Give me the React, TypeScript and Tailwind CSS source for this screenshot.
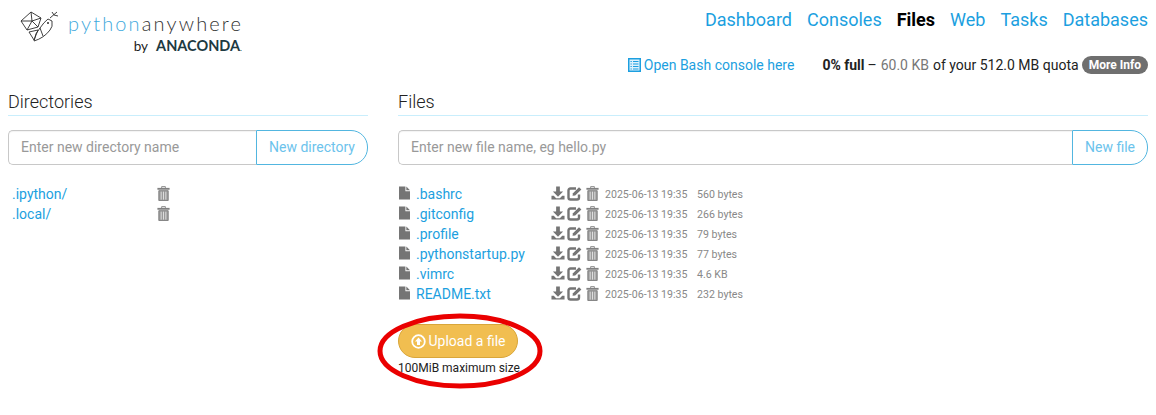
const files = [
  { name: ".bashrc", size: "560 bytes" },
  { name: ".gitconfig", size: "266 bytes" },
  { name: ".profile", size: "79 bytes" },
  { name: ".pythonstartup.py", size: "77 bytes" },
  { name: ".vimrc", size: "4.6 KB" },
  { name: "README.txt", size: "232 bytes" },
];

const nav = ["Dashboard", "Consoles", "Files", "Web", "Tasks", "Databases"];

function Logo() {
  return (
    <svg width="50" height="42" viewBox="0 0 50 42" fill="none" stroke="#2b2b2b" strokeWidth="0.9" strokeLinejoin="round" className="shrink-0">
      <path d="M2 12 L12 3 L22 9 L19 18 L8 21 Z M12 3 L13 12 L22 9 M2 12 L13 12 L8 21 M13 12 L19 18" />
      <path d="M10 23 L19 21 L15 31 Z" />
      <path d="M15 32 Q16 24 21 19 Q25 13 29 10 L33 12 Q34 18 31 21 Q25 29 15 32 Z M21 19 L24 27" />
      <path d="M31 9 L38 3 M33 3 L35 6 M35 6 L39 7" />
      <circle cx="29" cy="14" r="1" fill="#2b2b2b" stroke="none" />
    </svg>
  );
}

function DownloadIcon() {
  return (
    <svg width="14" height="14" viewBox="0 0 15 15" fill="#757575" className="shrink-0">
      <path d="M5.5 0.5 H9.5 V6 H13 L7.5 11.5 L2 6 H5.5 Z" />
      <path d="M0.5 10.5 H3 L5.5 13 H9.5 L12 10.5 H14.5 V14.5 H0.5 Z" />
    </svg>
  );
}

function EditIcon() {
  return (
    <svg width="15" height="15" viewBox="0 0 15 15" fill="none" className="shrink-0">
      <path d="M9 2.5 H3.5 Q1.5 2.5 1.5 4.5 V11.5 Q1.5 13.5 3.5 13.5 H10 Q12 13.5 12 11.5 V8.5" stroke="#757575" strokeWidth="2.4" />
      <path d="M5.5 9.8 L6 7.2 L12 1.2 L14.4 3.4 L8.2 9.4 Z" fill="#757575" />
    </svg>
  );
}

function TrashIcon() {
  return (
    <svg width="13" height="15" viewBox="0 0 13 16" fill="none" className="shrink-0">
      <path d="M4.5 2 V0.7 H8.5 V2" stroke="#808080" strokeWidth="1" />
      <path d="M0 2 H13 V4 H0 Z" fill="#808080" />
      <path d="M1.5 5 H11.5 V15.5 H1.5 Z" fill="#9a9a9a" stroke="#808080" />
      <path d="M4 6 V14.5 M6.5 6 V14.5 M9 6 V14.5" stroke="#e2e2e2" strokeWidth="1" />
    </svg>
  );
}

function FileIcon() {
  return (
    <svg width="11" height="14" viewBox="0 0 12 14" fill="#757575" className="shrink-0">
      <path d="M0 0 H7 V5 H12 V14 H0 Z" />
      <path d="M8 0 L12 4 H8 Z" />
    </svg>
  );
}

function ConsoleIcon() {
  return (
    <svg width="13" height="14" viewBox="0 0 13 14" fill="none" className="shrink-0">
      <rect x="0.75" y="0.75" width="11.5" height="12.5" stroke="#1c9fe0" strokeWidth="1.5" fill="#dff2fc" />
      <path d="M2.5 3.5 H3.8 M5 3.5 H10.5 M2.5 6 H3.8 M5 6 H10.5 M2.5 8.5 H3.8 M5 8.5 H10.5 M2.5 11 H3.8 M5 11 H10.5" stroke="#1c9fe0" strokeWidth="1.2" />
    </svg>
  );
}

function UploadIcon() {
  return (
    <svg width="15" height="15" viewBox="0 0 15 15" className="shrink-0">
      <circle cx="7.5" cy="7.5" r="6.3" fill="none" stroke="#fff" strokeWidth="1.8" />
      <path d="M7.5 3.4 L11 7.4 H9 V11 H6 V7.4 H4 Z" fill="#fff" />
    </svg>
  );
}

function NameForm({ placeholder, button, buttonClass }: { placeholder: string; button: string; buttonClass: string }) {
  return (
    <div className="flex h-[35px] mt-[14px] text-[14px]">
      <div className="flex-1 flex items-center pl-3 border border-[#c8c8c8] border-r-0 rounded-l-[5px] text-[#999] shadow-[inset_0_1px_1px_rgba(0,0,0,0.05)]">
        {placeholder}
      </div>
      <div className={`flex items-center justify-center border border-[#52b6e0] rounded-r-[17px] text-[#6cc3ec] ${buttonClass}`}>
        {button}
      </div>
    </div>
  );
}

export default function App() {
  return (
    <div className="relative w-[1156px] h-[415px] bg-white text-[#222] overflow-hidden font-['Roboto',sans-serif]">
      {/* Header */}
      <div className="flex justify-between h-[55px] pl-[19px] pr-2 pt-[9px]">
        <div className="flex">
          <Logo />
          <div className="w-[174px] ml-[-1px] pt-[2px] font-['Lato',sans-serif]">
            <div className="text-[20px] leading-[24px] tracking-[2.15px] font-light whitespace-nowrap">
              <span className="text-[#3fa9dd]">python</span>
              <span className="text-[#333]">anywhere</span>
            </div>
            <div className="flex items-baseline justify-end gap-[8px] text-[#222] whitespace-nowrap">
              <span className="text-[13.5px]">by</span>
              <span className="text-[14.5px] font-bold text-[#1d3a42]">ANACONDA<span className="text-[8px] font-normal">.</span></span>
            </div>
          </div>
        </div>
        <div className="flex gap-[15px] text-[18px] leading-[21px] text-[#1c9fe0]">
          {nav.map((item) => (
            <span key={item} className={item === "Files" ? "text-black font-bold" : ""}>
              {item}
            </span>
          ))}
        </div>
      </div>

      {/* Quota */}
      <div className="flex justify-end items-center h-[20px] pr-2 text-[14px]">
        <ConsoleIcon />
        <span className="ml-[3px] text-[#1c9fe0]">Open Bash console here</span>
        <span className="ml-[28px] font-bold">0% full</span>
        <span className="ml-[3px]">–</span>
        <span className="ml-[4px] text-[#777]">60.0 KB</span>
        <span className="ml-[4px]">of your 512.0 MB quota</span>
        <span className="ml-[3px] h-[18px] px-[7px] flex items-center rounded-[9px] bg-[#6f6f6f] text-white text-[12px] font-bold">More Info</span>
      </div>

      {/* Columns */}
      <div className="flex gap-[30px] px-2 mt-[15px]">
        <div className="w-[360px]">
          <h2 className="h-[26px] text-[18px] font-light leading-[24px] text-[#222] border-b border-[#c9eefc]">Directories</h2>
          <NameForm placeholder="Enter new directory name" button="New directory" buttonClass="w-[112px]" />
          <div className="mt-[19px] pl-1 text-[14px] text-[#1c9fe0]">
            {[".ipython/", ".local/"].map((d) => (
              <div key={d} className="flex items-center h-[20px]">
                <span className="w-[145px]">{d}</span>
                <span className="mb-[2px]"><TrashIcon /></span>
              </div>
            ))}
          </div>
        </div>

        <div className="flex-1">
          <h2 className="h-[26px] text-[18px] font-light leading-[24px] text-[#222] border-b border-[#c9eefc]">Files</h2>
          <NameForm placeholder="Enter new file name, eg hello.py" button="New file" buttonClass="w-[76px]" />
          <div className="mt-[19px]">
            {files.map((f) => (
              <div key={f.name} className="flex items-center h-[20px]">
                <span className="ml-[1px] mb-[2px]"><FileIcon /></span>
                <span className="ml-[6px] w-[135px] text-[14px] text-[#1c9fe0]">{f.name}</span>
                <span className="mb-[2px]"><DownloadIcon /></span>
                <span className="ml-[2px] mb-[2px]"><EditIcon /></span>
                <span className="ml-[4px] mb-[2px]"><TrashIcon /></span>
                <span className="ml-[6px] w-[92px] pt-[1px] text-[10.6px] text-[#888]">2025-06-13 19:35</span>
                <span className="pt-[1px] text-[10.6px] text-[#888]">{f.size}</span>
              </div>
            ))}
          </div>
          <div className="flex items-center justify-center gap-[3px] w-[120px] h-[34px] mt-[20px] rounded-[17px] bg-[#f1be50] border border-[#d9a63a] text-white text-[14px]">
            <UploadIcon />
            Upload a file
          </div>
          <div className="mt-[1px] text-[12px] leading-[18px] text-[#222]">100MiB maximum size</div>
        </div>
      </div>

      {/* Red annotation ellipse */}
      <svg width="170" height="84" viewBox="0 0 170 84" fill="none" className="absolute left-[375px] top-[309px]">
        <ellipse cx="85" cy="42" rx="80" ry="35" stroke="#ea0000" strokeWidth="5" />
      </svg>
    </div>
  );
}
